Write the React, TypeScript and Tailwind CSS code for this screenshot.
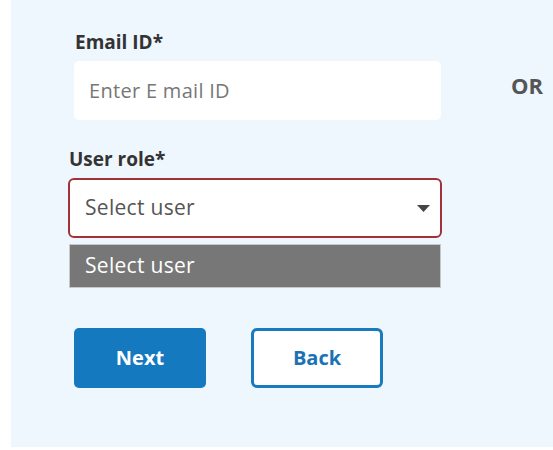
export default function App() {
  return (
    <div className="h-[450px] w-[553px] bg-white font-['Open_Sans',sans-serif] overflow-hidden">
      <div className="ml-[11px] h-[447px] bg-[#eef6fe] pt-[30px]">
        <div className="flex items-start">
          <div className="ml-[63px] w-[367px]">
            <label className="block ml-[1px] text-[19px] font-bold text-[#333] leading-[24px]">Email ID*</label>
            <input
              placeholder="Enter E mail ID"
              className="mt-[7px] w-[367px] h-[59px] rounded-[5px] bg-white px-[15px] text-[20px] tracking-[0.3px] text-[#333] placeholder:text-[#777] outline-none"
            />
          </div>
          <div className="ml-[70px] mt-[40px] text-[22px] leading-[30px] font-bold text-[#555]">OR</div>
        </div>

        <div className="ml-[57px] mt-[27px] w-[374px]">
          <label className="block ml-[1px] text-[19px] font-bold text-[#333] leading-[24px]">User role*</label>
          <div className="mt-[7px] h-[60px] rounded-[6px] border-2 border-[#a2323a] bg-white flex items-center justify-between pl-[15px] pr-[10px]">
            <span className="text-[21px] tracking-[0.3px] text-[#555]">Select user</span>
            <svg width="13" height="7" viewBox="0 0 13 7"><path d="M0 0h13L6.5 7z" fill="#444" /></svg>
          </div>
          <div className="mt-[6px] ml-[1px] w-[372px] h-[44px] bg-[#777] border border-[#c8c8c8] flex items-center pl-[15px]">
            <span className="text-[21px] tracking-[0.3px] text-white">Select user</span>
          </div>
        </div>

        <div className="flex ml-[63px] mt-[40px] gap-[45px]">
          <button className="w-[132px] h-[60px] rounded-[5px] bg-[#1479bf] text-white text-[20px] font-bold">Next</button>
          <button className="w-[132px] h-[60px] rounded-[6px] bg-white border-[3px] border-[#1a7abf] text-[#1a72b5] text-[20px] font-bold">Back</button>
        </div>
      </div>
    </div>
  );
}
